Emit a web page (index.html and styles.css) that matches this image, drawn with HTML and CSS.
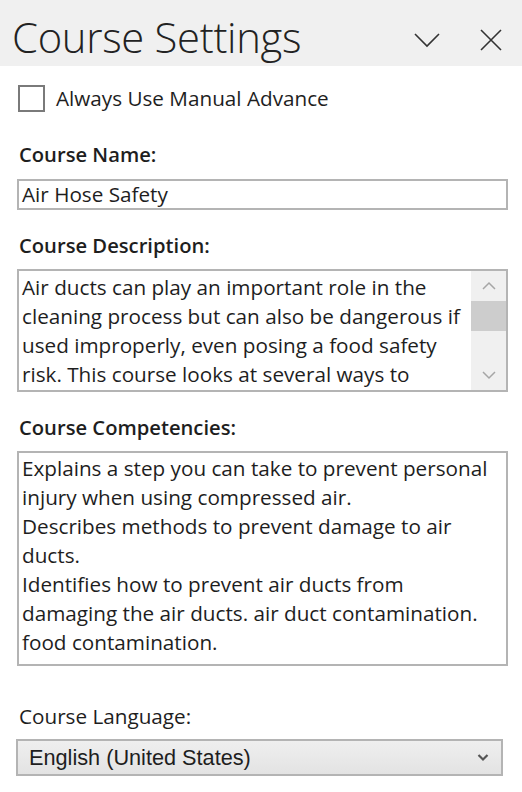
FILE: index.html
```html
<!DOCTYPE html>
<html lang="en">
<head>
  <meta charset="UTF-8">
  <title>Course Settings</title>
  <link rel="stylesheet" href="styles.css">
</head>
<body>
  <div class="header">
    <h1>Course Settings</h1>
    <div class="header-icons">
      <svg class="icon-chevron" width="26" height="16" viewBox="0 0 26 16"><path d="M1 2 L13 14 L25 2" fill="none" stroke="#333" stroke-width="1.6"/></svg>
      <svg class="icon-close" width="22" height="22" viewBox="0 0 22 22"><path d="M1 1 L21 21 M21 1 L1 21" fill="none" stroke="#333" stroke-width="1.6"/></svg>
    </div>
  </div>

  <div class="panel">
    <label class="check-row">
      <span class="checkbox"></span>
      <span>Always Use Manual Advance</span>
    </label>

    <div class="field-label name">Course Name:</div>
    <div class="text-input">Air Hose Safety</div>

    <div class="field-label">Course Description:</div>
    <div class="text-box desc">
      <div class="text-content">Air ducts can play an important role in the cleaning process but can also be dangerous if used improperly, even posing a food safety risk. This course looks at several ways to</div>
      <div class="scrollbar">
        <svg width="16" height="10" viewBox="0 0 16 10"><path d="M2 8 L8 2 L14 8" fill="none" stroke="#a6a6a6" stroke-width="1.5"/></svg>
        <div class="thumb"></div>
        <div class="track"></div>
        <svg width="16" height="10" viewBox="0 0 16 10"><path d="M2 2 L8 8 L14 2" fill="none" stroke="#a6a6a6" stroke-width="1.5"/></svg>
      </div>
    </div>

    <div class="field-label">Course Competencies:</div>
    <div class="text-box comp">
      <div class="text-content">Explains a step you can take to prevent personal injury when using compressed air.<br>Describes methods to prevent damage to air ducts.<br>Identifies how to prevent air ducts from damaging the air ducts. air duct contamination. food contamination.</div>
    </div>

    <div class="field-label lang">Course Language:</div>
    <div class="select">
      <span>English (United States)</span>
      <svg width="12" height="9" viewBox="0 0 12 9"><path d="M1.5 2 L6 6.5 L10.5 2" fill="none" stroke="#555" stroke-width="2.2"/></svg>
    </div>
  </div>
</body>
</html>
```

FILE: styles.css
```css
body {
  margin: 0;
  background: #fff;
  font-family: "Open Sans", "Noto Sans", sans-serif;
  color: #1e1e1e;
}
.header {
  display: flex;
  align-items: center;
  justify-content: space-between;
  height: 66px;
  background: #f0f0f0;
  padding: 0 20px 0 12px;
}
h1 {
  margin: 0;
  padding-top: 6px;
  font-weight: 300;
  font-size: 41.8px;
  color: #222;
  letter-spacing: -0.3px;
}
.header-icons {
  display: flex;
  align-items: center;
  gap: 40px;
  padding-top: 14px;
}
.panel {
  padding: 19px 14px 0 17px;
}
.check-row {
  display: flex;
  align-items: center;
  gap: 11px;
  font-size: 20.7px;
  line-height: 25px;
  margin-left: 1px;
}
.checkbox {
  width: 23px;
  height: 23px;
  border: 2px solid #7a7a7a;
  background: #fff;
}
.field-label {
  font-weight: 600;
  font-size: 20.2px;
  line-height: 24px;
  margin: 23px 0 12px 2px;
}
.field-label.name {
  margin: 30px 0 13px 2px;
}
.text-input {
  border: 2px solid #b4b4b4;
  height: 27px;
  font-size: 20.7px;
  line-height: 27px;
  padding-left: 3px;
}
.text-box {
  display: flex;
  border: 2px solid #b4b4b4;
}
.text-content {
  flex: 1;
  font-size: 20.7px;
  line-height: 29px;
  padding: 2px 3px;
}
.desc {
  height: 119px;
  overflow: hidden;
}
.comp {
  height: 211px;
}
.comp .text-content {
  padding-top: 1px;
}
.scrollbar {
  width: 35px;
  background: #f0f0f0;
  display: flex;
  flex-direction: column;
  align-items: center;
}
.scrollbar svg {
  margin: 10px 0;
}
.thumb {
  width: 100%;
  height: 30px;
  background: #cdcdcd;
}
.track {
  flex: 1;
}
.field-label.lang {
  font-weight: 400;
  font-size: 20.7px;
  margin: 38px 0 11px 2px;
}
.select {
  display: flex;
  align-items: center;
  justify-content: space-between;
  box-sizing: border-box;
  width: 487px;
  height: 37px;
  margin-left: -1px;
  padding: 0 12px 0 11px;
  border: 2px solid #b4b4b4;
  background: linear-gradient(#efefef, #e3e3e3);
  font-family: "Liberation Sans", Arial, sans-serif;
  font-size: 21.7px;
}
```
